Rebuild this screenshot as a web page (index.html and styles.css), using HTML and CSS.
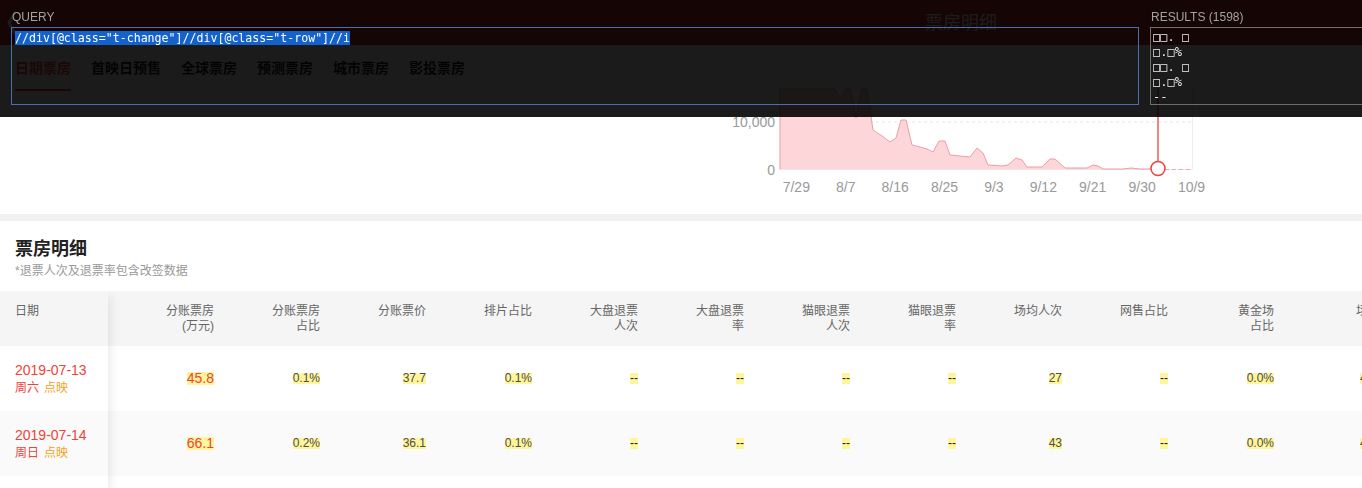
FILE: index.html
```html
<!DOCTYPE html>
<html lang="zh-CN">
<head>
<meta charset="utf-8">
<title>日期票房</title>
<link rel="stylesheet" href="styles.css">
</head>
<body>
<div class="page">
  <header class="topbar">
    <svg class="back" width="10" height="26" viewBox="0 0 10 26"><path d="M8 2 L2 13 L8 24" fill="none" stroke="#ffffff" stroke-width="3"/></svg>
    <span class="topbar-title">票房明细</span>
  </header>

  <section class="summary">
    <nav class="tabs">
      <a class="tab active">日期票房</a>
      <a class="tab">首映日预售</a>
      <a class="tab">全球票房</a>
      <a class="tab">预测票房</a>
      <a class="tab">城市票房</a>
      <a class="tab">影投票房</a>
    </nav>
    <svg class="chart" width="500" height="169" viewBox="0 0 500 169">
      <line x1="60" y1="77" x2="472" y2="77" stroke="#e6e6e6" stroke-dasharray="3 3"/>
      <line x1="472.5" y1="43" x2="472.5" y2="124.5" stroke="#ededed"/>
      <line x1="60" y1="124.5" x2="472" y2="124.5" stroke="#ececec"/>
      <path d="M60,124.5 L60,44 L115,44 L120,54 L126,44 L130,44 L136,73 L142,44 L147,44 L153,85 L162,91 L170,97 L176,93 L181,75 L186,75 L192,100 L200,102 L207,104 L213,107 L219,96 L225,96 L230,110 L240,111 L250,112 L257,103 L263,108 L268,120 L282,121 L288,120 L296,113 L302,115 L307,122 L322,122 L330,114 L335,114 L345,123 L367,123 L373,120 L378,121 L383,124 L403,124 L411,123 L420,124 L428,124 L438,123 L438,124.5 Z" fill="#fdd6da"/>
      <path d="M60,124.5 L60,44 L115,44 L120,54 L126,44 L130,44 L136,73 L142,44 L147,44 L153,85 L162,91 L170,97 L176,93 L181,75 L186,75 L192,100 L200,102 L207,104 L213,107 L219,96 L225,96 L230,110 L240,111 L250,112 L257,103 L263,108 L268,120 L282,121 L288,120 L296,113 L302,115 L307,122 L322,122 L330,114 L335,114 L345,123 L367,123 L373,120 L378,121 L383,124 L403,124 L411,123 L420,124 L428,124 L438,123" fill="none" stroke="#f29ca2" stroke-width="1"/>
      <line x1="445" y1="124.5" x2="472" y2="124.5" stroke="#f7a5aa" stroke-dasharray="4 3"/>
      <line x1="438" y1="43" x2="438" y2="116.5" stroke="#ef4238" stroke-width="1.3"/>
      <circle cx="438" cy="123.5" r="7" fill="#ffffff" stroke="#ef4238" stroke-width="1.5"/>
      <g class="axis">
        <text x="55" y="81.7" text-anchor="end">10,000</text>
        <text x="55" y="129.5" text-anchor="end">0</text>
        <text x="76.3" y="146.7" text-anchor="middle">7/29</text>
        <text x="125.7" y="146.7" text-anchor="middle">8/7</text>
        <text x="175.1" y="146.7" text-anchor="middle">8/16</text>
        <text x="224.5" y="146.7" text-anchor="middle">8/25</text>
        <text x="273.9" y="146.7" text-anchor="middle">9/3</text>
        <text x="323.3" y="146.7" text-anchor="middle">9/12</text>
        <text x="372.7" y="146.7" text-anchor="middle">9/21</text>
        <text x="422.1" y="146.7" text-anchor="middle">9/30</text>
        <text x="471.5" y="146.7" text-anchor="middle">10/9</text>
      </g>
    </svg>
  </section>

  <div class="divider"></div>

  <section class="detail">
    <h2 class="detail-title">票房明细</h2>
    <p class="note">*退票人次及退票率包含改签数据</p>
    <div class="table">
      <div class="fixed">
        <div class="fhead">日期</div>
        <div class="fdate">
          <span class="d1">2019-07-13</span>
          <span class="d2">周六<span class="tag">点映</span></span>
        </div>
        <div class="fdate alt">
          <span class="d1">2019-07-14</span>
          <span class="d2">周日<span class="tag">点映</span></span>
        </div>
        <div class="fdate"></div>
      </div>
      <div class="cols">
        <div class="row head">
          <div class="hcell">分账票房<br>(万元)</div>
          <div class="hcell">分账票房<br>占比</div>
          <div class="hcell">分账票价</div>
          <div class="hcell">排片占比</div>
          <div class="hcell">大盘退票<br>人次</div>
          <div class="hcell">大盘退票<br>率</div>
          <div class="hcell">猫眼退票<br>人次</div>
          <div class="hcell">猫眼退票<br>率</div>
          <div class="hcell">场均人次</div>
          <div class="hcell">网售占比</div>
          <div class="hcell">黄金场<br>占比</div>
          <div class="hcell">场次</div>
        </div>
        <div class="row">
          <div class="cell"><i class="v big">45.8</i></div>
          <div class="cell"><i class="v">0.1%</i></div>
          <div class="cell"><i class="v">37.7</i></div>
          <div class="cell"><i class="v">0.1%</i></div>
          <div class="cell"><i class="v na">--</i></div>
          <div class="cell"><i class="v na">--</i></div>
          <div class="cell"><i class="v na">--</i></div>
          <div class="cell"><i class="v na">--</i></div>
          <div class="cell"><i class="v">27</i></div>
          <div class="cell"><i class="v na">--</i></div>
          <div class="cell"><i class="v">0.0%</i></div>
          <div class="cell"><i class="v">450</i></div>
        </div>
        <div class="row alt">
          <div class="cell"><i class="v big">66.1</i></div>
          <div class="cell"><i class="v">0.2%</i></div>
          <div class="cell"><i class="v">36.1</i></div>
          <div class="cell"><i class="v">0.1%</i></div>
          <div class="cell"><i class="v na">--</i></div>
          <div class="cell"><i class="v na">--</i></div>
          <div class="cell"><i class="v na">--</i></div>
          <div class="cell"><i class="v na">--</i></div>
          <div class="cell"><i class="v">43</i></div>
          <div class="cell"><i class="v na">--</i></div>
          <div class="cell"><i class="v">0.0%</i></div>
          <div class="cell"><i class="v">426</i></div>
        </div>
        <div class="row"></div>
      </div>
    </div>
  </section>
</div>

<div class="xh">
  <div class="xh-query">
    <div class="xh-label">QUERY</div>
    <div class="xh-box qbox"><span class="sel">//div[@class="t-change"]//div[@class="t-row"]//i</span></div>
  </div>
  <div class="xh-results">
    <div class="xh-label">RESULTS (1598)</div>
    <div class="xh-box rbox">
      <div class="rline">□□. □</div>
      <div class="rline">□.□%</div>
      <div class="rline">□□. □</div>
      <div class="rline">□.□%</div>
      <div class="rline">--</div>
    </div>
  </div>
</div>
</body>
</html>
```

FILE: styles.css
```css
html, body {
  margin: 0;
  height: 100%;
  overflow: hidden;
}

body {
  font-family: "Liberation Sans", "Noto Sans CJK SC", sans-serif;
  background: #ffffff;
  color: #333333;
}

/* ---------- page header ---------- */
.topbar {
  height: 45px;
  background: #c62f2f;
  display: flex;
  align-items: center;
}

.back {
  margin-left: 7px;
  flex: none;
}

.topbar-title {
  margin-left: 908px;
  font-size: 18px;
  line-height: 24px;
  color: #ffffff;
}

/* ---------- summary: tabs + chart ---------- */
.summary {
  display: flex;
  height: 169px;
}

.tabs {
  flex: none;
  width: 705px;
  padding-left: 15px;
  display: flex;
  gap: 20px;
  align-items: flex-start;
}

.tab {
  font-size: 14px;
  line-height: 20px;
  padding: 13px 0 11px;
  border-bottom: 2px solid transparent;
  color: #222222;
  font-weight: bold;
}

.tab.active {
  color: #ef4238;
  border-bottom-color: #ef4238;
}

.chart {
  flex: none;
  display: block;
}

.axis text {
  font-family: "Liberation Sans", sans-serif;
  font-size: 14px;
  fill: #999999;
}

.divider {
  height: 7px;
  background: #f1f1f1;
}

/* ---------- detail table ---------- */
.detail {
  padding-top: 16px;
}

.detail-title {
  margin: 0 0 0 15px;
  font-size: 18px;
  line-height: 24px;
  font-weight: bold;
  color: #222222;
}

.note {
  margin: 2px 0 12px 15px;
  font-size: 12px;
  line-height: 16px;
  color: #999999;
}

.table {
  display: flex;
  overflow: hidden;
}

.fixed {
  flex: none;
  width: 108px;
  position: relative;
  z-index: 1;
  background: #ffffff;
  box-shadow: 7px 0 10px -5px rgba(0, 0, 0, 0.09);
}

.fhead {
  height: 55px;
  box-sizing: border-box;
  padding: 13px 0 0 15px;
  background: #f5f5f5;
  font-size: 12px;
  line-height: 15px;
  color: #666666;
}

.fdate {
  height: 65px;
  box-sizing: border-box;
  padding-left: 15px;
  display: flex;
  flex-direction: column;
  justify-content: center;
  background: #ffffff;
}

.fdate.alt {
  background: #fafafa;
}

.d1 {
  font-size: 14px;
  line-height: 18px;
  color: #ef4238;
}

.d2 {
  font-size: 12px;
  line-height: 18px;
  color: #ef4238;
}

.tag {
  margin-left: 5px;
  color: #f9a21a;
}

.cols {
  flex: none;
  display: flex;
  flex-direction: column;
}

.row {
  display: flex;
  align-items: center;
  height: 65px;
  background: #ffffff;
}

.row.alt {
  background: #fafafa;
}

.row.head {
  height: 55px;
  align-items: flex-start;
  background: #f5f5f5;
}

.hcell {
  flex: none;
  width: 106px;
  box-sizing: border-box;
  padding-top: 13px;
  text-align: right;
  font-size: 12px;
  line-height: 15px;
  color: #666666;
}

.cell {
  flex: none;
  width: 106px;
  display: flex;
  justify-content: flex-end;
}

.v {
  display: block;
  font-style: normal;
  font-size: 12px;
  line-height: 11px;
  background: #fff59b;
  color: #4d4d4d;
}

.v.big {
  font-size: 14px;
  line-height: 13px;
  color: #ef4238;
}

.v.na {
  color: #1e1e1e;
}

/* ---------- XPath helper overlay ---------- */
.xh {
  position: fixed;
  top: 0;
  left: 0;
  right: 0;
  height: 117px;
  z-index: 10;
  background: rgba(0, 0, 0, 0.894);
  display: flex;
  gap: 11px;
  padding-left: 11px;
  overflow: hidden;
}

.xh-query {
  flex: none;
  width: 1128px;
}

.xh-results {
  flex: none;
  width: 320px;
}

.xh-label {
  padding: 10px 0 0 1px;
  margin-bottom: 3px;
  font-family: "Liberation Sans", sans-serif;
  font-size: 12px;
  line-height: 14px;
  color: #a2a2a2;
}

.xh-box {
  height: 78px;
  box-sizing: border-box;
}

.qbox {
  border: 1px solid #4b6fae;
  padding: 3px 3px;
  font-family: "DejaVu Sans Mono", monospace;
  font-size: 11.6px;
  line-height: 14px;
}

.sel {
  background: #1462cc;
  color: #ffffff;
}

.rbox {
  border: 1px solid #6e6e6e;
  padding: 2px 2px;
  font-family: "DejaVu Sans Mono", monospace;
  font-size: 12px;
  line-height: 15px;
  color: #ececec;
}

.rline {
  white-space: pre;
  height: 15px;
}
```
